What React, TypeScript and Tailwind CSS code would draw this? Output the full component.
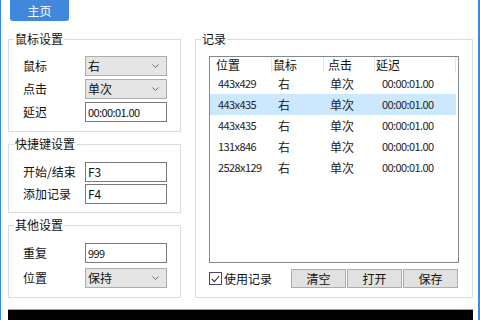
import React from "react";

const rows = [
  { pos: "443x429", btn: "右", click: "单次", delay: "00:00:01.00" },
  { pos: "443x435", btn: "右", click: "单次", delay: "00:00:01.00", selected: true },
  { pos: "443x435", btn: "右", click: "单次", delay: "00:00:01.00" },
  { pos: "131x846", btn: "右", click: "单次", delay: "00:00:01.00" },
  { pos: "2528x129", btn: "右", click: "单次", delay: "00:00:01.00" },
];

const Chevron = () => (
  <svg width="7" height="4" viewBox="0 0 7 4" className="shrink-0">
    <path d="M0.5 0.5 L3.5 3.5 L6.5 0.5" fill="none" stroke="#6b6b6b" strokeWidth="1" />
  </svg>
);

const Select: React.FC<{ value: string }> = ({ value }) => (
  <div className="flex items-center justify-between w-[82px] h-[20px] bg-[#e5e5e5] border border-[#adadad] pl-[2px] pr-[7px] text-[12px] text-[#111]">
    <span>{value}</span>
    <Chevron />
  </div>
);

const Input: React.FC<{ value: string; num?: boolean }> = ({ value, num }) => (
  <div
    className={`flex items-center w-[82px] h-[20px] bg-white border border-[#7a7a7a] pl-[2px] text-[#111] ${
      num ? "text-[11px] tracking-[-0.6px]" : "text-[12px]"
    }`}
  >
    {value}
  </div>
);

const Row: React.FC<{ label: string; children: React.ReactNode }> = ({ label, children }) => (
  <div className="flex items-center">
    <span className="w-[76px] pl-[14px] text-[12px] text-[#111] whitespace-nowrap">{label}</span>
    {children}
  </div>
);

const Group: React.FC<{ title: string; className?: string; children: React.ReactNode }> = ({
  title,
  className = "",
  children,
}) => (
  <fieldset className={`border border-[#dcdcdc] ${className}`}>
    <legend className="ml-[5px] px-px text-[12px] leading-[16px] text-[#111]">{title}</legend>
    {children}
  </fieldset>
);

export default function App() {
  return (
    <div
      className="w-[480px] h-[320px] overflow-hidden bg-white border-l border-r-2 border-[#3a8be0] flex flex-col"
      style={{ fontFamily: '"Noto Sans CJK SC", "Noto Sans", sans-serif' }}
    >
      {/* top tab */}
      <div className="ml-[9px] w-[59px] h-[21px] bg-[#3f88de] rounded-b-[3px] flex items-center justify-center text-white text-[12px]">
        主页
      </div>

      <div className="flex mt-[10px] pl-[7px] gap-[14px]">
        {/* left column */}
        <div className="w-[173px] flex flex-col">
          <Group title="鼠标设置" className="pb-[9px]">
            <div className="mt-[9px] flex flex-col gap-[3px]">
              <Row label="鼠标">
                <Select value="右" />
              </Row>
              <Row label="点击">
                <Select value="单次" />
              </Row>
              <Row label="延迟">
                <Input value="00:00:01.00" num />
              </Row>
            </div>
          </Group>

          <Group title="快捷键设置" className="mt-[4px] pb-[8px]">
            <div className="mt-[10px] flex flex-col gap-[2px]">
              <Row label="开始/结束">
                <Input value="F3" />
              </Row>
              <Row label="添加记录">
                <Input value="F4" />
              </Row>
            </div>
          </Group>

          <Group title="其他设置" className="mt-[4px] pb-[9px]">
            <div className="mt-[10px] flex flex-col gap-[5px]">
              <Row label="重复">
                <Input value="999" num />
              </Row>
              <Row label="位置">
                <Select value="保持" />
              </Row>
            </div>
          </Group>
        </div>

        {/* right column */}
        <div className="w-[278px]">
          <Group title="记录" className="h-[267px]">
            <div className="px-[13px]">
              <div className="mt-[9px] h-[207px] border border-[#828790] bg-white">
                <div className="flex h-[16px] items-center text-[12px] text-[#111]">
                  <div className="w-[62px] h-full pl-[6px] border-r border-[#e5e5e5] leading-[16px]">位置</div>
                  <div className="w-[52px] h-full pl-[1px] border-r border-[#e5e5e5] leading-[16px]">鼠标</div>
                  <div className="w-[51px] h-full pl-[4px] border-r border-[#e5e5e5] leading-[16px]">点击</div>
                  <div className="w-[81px] h-full pl-[1px] border-r border-[#e5e5e5] leading-[16px]">延迟</div>
                </div>
                {rows.map((r, i) => (
                  <div
                    key={i}
                    className={`flex items-center h-[21px] w-[246px] text-[#222] ${r.selected ? "bg-[#cce8ff]" : ""}`}
                  >
                    <div className="w-[62px] pl-[8px] text-[11px] tracking-[-0.6px]">{r.pos}</div>
                    <div className="w-[52px] pl-[6px] text-[12px]">{r.btn}</div>
                    <div className="w-[51px] pl-[6px] text-[12px]">{r.click}</div>
                    <div className="w-[81px] pl-[7px] text-[11px] tracking-[-0.6px]">{r.delay}</div>
                  </div>
                ))}
              </div>

              <div className="flex items-center mt-[6px] h-[19px]">
                <div className="flex items-center gap-[2px]">
                  <div className="w-[13px] h-[13px] border border-[#4d4470] bg-white flex items-center justify-center">
                    <svg width="9" height="8" viewBox="0 0 9 8">
                      <path d="M0.8 4 L3.4 6.6 L8.2 1" fill="none" stroke="#333" strokeWidth="1.1" />
                    </svg>
                  </div>
                  <span className="text-[12px] text-[#111]">使用记录</span>
                </div>
                <div className="ml-auto mr-px flex gap-[1px]">
                  {["清空", "打开", "保存"].map((b) => (
                    <div
                      key={b}
                      className="w-[55px] h-[19px] bg-[#e1e1e1] border border-[#adadad] flex items-center justify-center text-[12px] text-[#111]"
                    >
                      {b}
                    </div>
                  ))}
                </div>
              </div>
            </div>
          </Group>
        </div>
      </div>

      {/* output strip */}
      <div className="mt-[11px] ml-[7px] w-[465px] flex-1 border-t border-[#a0a0a0] bg-black" />
    </div>
  );
}
